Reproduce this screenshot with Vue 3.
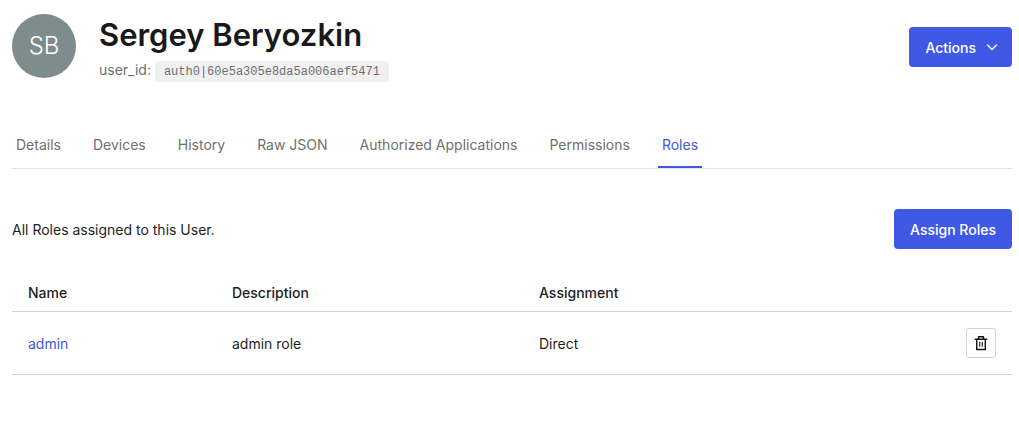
<script setup>
const tabs = ['Details', 'Devices', 'History', 'Raw JSON', 'Authorized Applications', 'Permissions', 'Roles']
const active = 'Roles'
const roles = [{ name: 'admin', description: 'admin role', assignment: 'Direct' }]
</script>

<template>
  <main class="page">
    <header class="head">
      <div class="avatar">SB</div>
      <div class="identity">
        <h1>Sergey Beryozkin</h1>
        <p class="uid">user_id: <code>auth0|60e5a305e8da5a006aef5471</code></p>
      </div>
      <button class="btn actions" type="button">
        Actions
        <svg width="12" height="12" viewBox="0 0 12 12" fill="none" stroke="currentColor" stroke-width="1.4" stroke-linecap="round" stroke-linejoin="round" aria-hidden="true"><path d="M1.500 3 6 7.500l4.500-4.500" /></svg>
      </button>
    </header>
    <nav class="tabs">
      <a v-for="t in tabs" :key="t" href="#" :class="{ active: t === active }">{{ t }}</a>
    </nav>
    <section class="intro">
      <p>All Roles assigned to this User.</p>
      <button class="btn" type="button">Assign Roles</button>
    </section>
    <table>
      <thead>
        <tr><th class="c-name">Name</th><th class="c-desc">Description</th><th>Assignment</th><th class="c-act"></th></tr>
      </thead>
      <tbody>
        <tr v-for="r in roles" :key="r.name">
          <td><a href="#">{{ r.name }}</a></td>
          <td>{{ r.description }}</td>
          <td>{{ r.assignment }}</td>
          <td class="c-act">
            <button class="trash" type="button" aria-label="Remove role">
              <svg width="16" height="16" viewBox="0 0 16 16" fill="none" stroke="currentColor" aria-hidden="true">
                <path stroke-width="1.4" stroke-linecap="round" d="M2.300 4.300h11.400" />
                <path stroke-width="1.4" stroke-linejoin="round" d="M5.500 4.300V1.700h5v2.600M3.700 4.300v10.200h8.600V4.300" />
                <path stroke-width="1.100" d="M6.700 7v4.700M9.300 7v4.700" />
              </svg>
            </button>
          </td>
        </tr>
      </tbody>
    </table>
  </main>
</template>

<style>
body { background: #fff; }
</style>

<style scoped>
.page { padding: 14px 7px 0 12px; font: 14px/20px Inter, "Liberation Sans", sans-serif; color: #1e1e1e; }
h1, p { margin: 0; }
a { color: #3f59e4; text-decoration: none; }
.head { display: flex; align-items: flex-start; }
.avatar { width: 64px; height: 64px; border-radius: 50%; background: #7f8c8d; color: #fff; font-size: 24px; line-height: 64px; text-align: center; font-weight: 300; }
.identity { flex: 1; margin-left: 23px; }
h1 { font-size: 31px; line-height: 42px; font-weight: 600; color: #191919; }
.uid { margin-top: 4px; color: #6f6f6f; }
code { padding: 4px 9px 3px; border-radius: 3px; background: #f0f0f0; font: 12px/16px "Liberation Mono", monospace; }
.btn { height: 40px; padding: 2px 16px 0; border: 0; border-radius: 4px; background: #3f59e4; color: #fff; font: 500 14px/20px Inter, sans-serif; }
.actions { display: flex; align-items: center; gap: 10px; margin-top: 13px; padding-right: 14px; }
.tabs { display: flex; gap: 24px; margin-top: 42px; border-bottom: 1px solid #e3e3e3; }
.tabs a { padding: 13px 4px 11px; border-bottom: 2px solid transparent; color: #6f6f6f; }
.tabs .active { color: #3f59e4; border-color: #3f59e4; }
.intro { display: flex; align-items: center; justify-content: space-between; margin-top: 40px; }
.intro p { padding-top: 2px; }
table { width: 100%; margin-top: 26px; border-collapse: collapse; table-layout: fixed; }
th, td { padding: 0 16px; text-align: left; border-bottom: 1px solid #d3d3d3; }
th { height: 36px; font-weight: 500; }
td { height: 60px; padding-top: 2px; }
.c-name { width: 20.4%; box-sizing: border-box; }
.c-desc { width: 30.7%; box-sizing: border-box; }
td.c-act { height: 62px; padding-top: 0; text-align: right; }
.trash { display: inline-flex; align-items: center; justify-content: center; width: 30px; height: 30px; padding: 0; border: 1px solid #d3d3d3; border-radius: 3px; background: #fff; color: #111; vertical-align: middle; }
</style>
